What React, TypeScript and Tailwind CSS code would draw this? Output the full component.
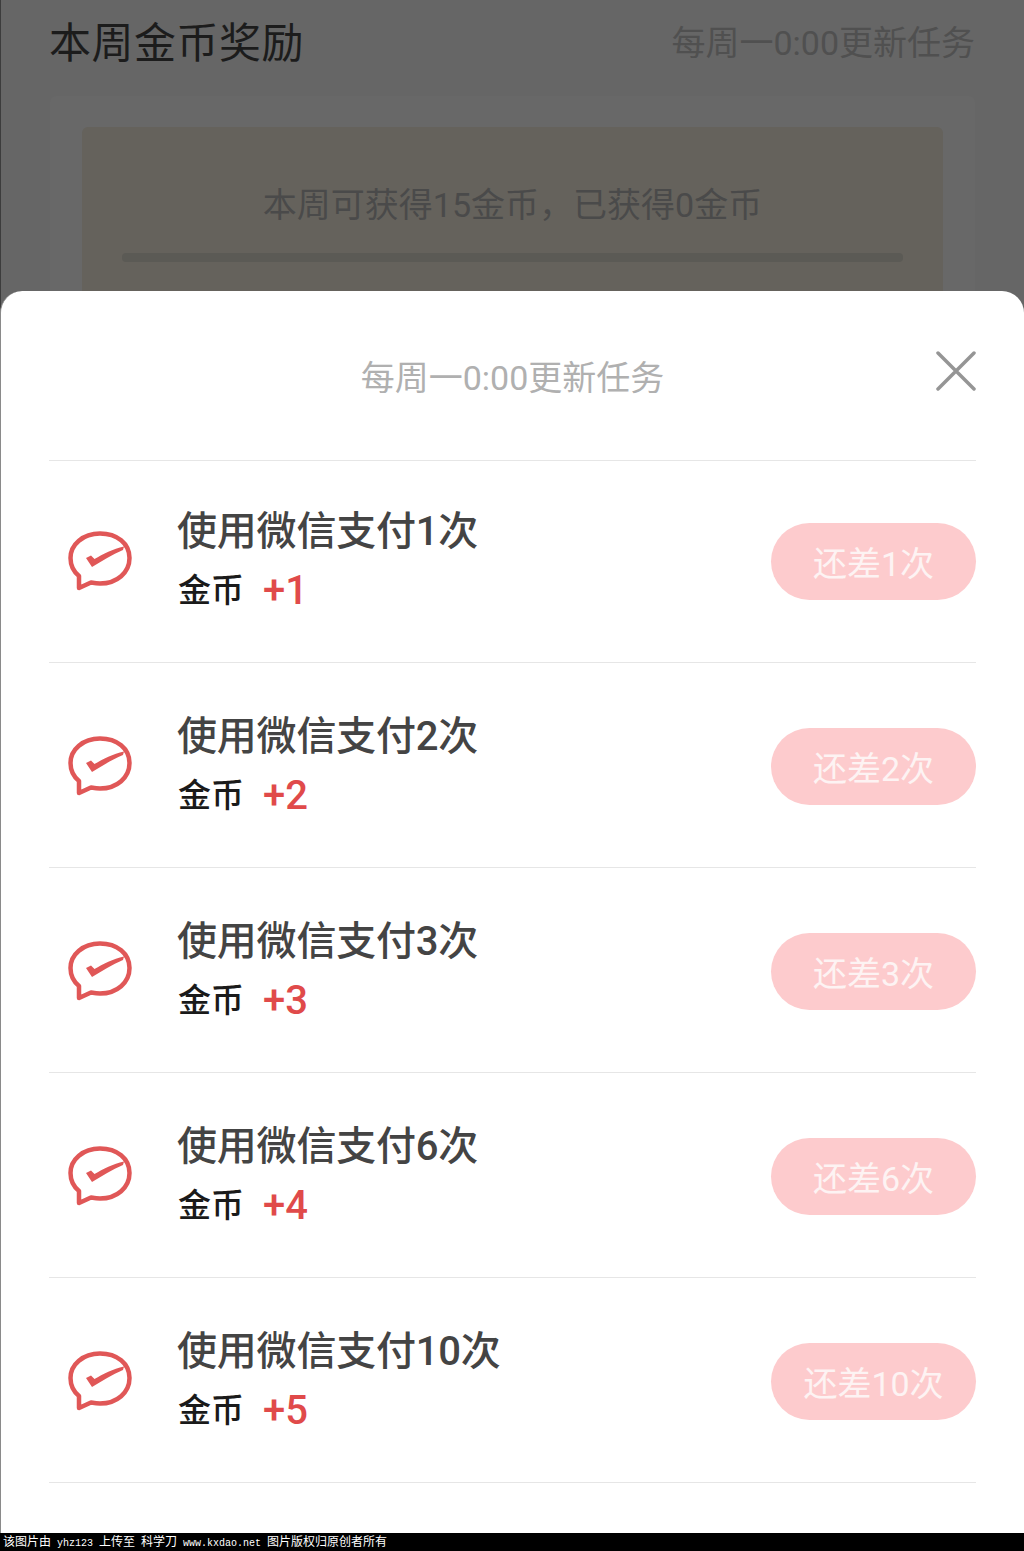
const font = "font-['Roboto','Noto_Sans_CJK_SC',sans-serif]";

const tasks = [
  { title: "使用微信支付1次", coin: "+1", left: "还差1次", first: true },
  { title: "使用微信支付2次", coin: "+2", left: "还差2次" },
  { title: "使用微信支付3次", coin: "+3", left: "还差3次" },
  { title: "使用微信支付6次", coin: "+4", left: "还差6次" },
  { title: "使用微信支付10次", coin: "+5", left: "还差10次" },
];

function WechatPayIcon() {
  return (
    <svg width="66" height="62" viewBox="0 0 66 62" fill="none" className="shrink-0">
      <path
        d="M32 2.5C15 2.5 2.5 13.5 2.500 27c0 7 3 13.500 8.500 18v12l12-5.500c3 .5 6 1 9 1 17 0 29.500-11 29.500-25.500S49 2.500 32 2.500Z"
        stroke="#e05757"
        strokeWidth="4.5"
        strokeLinejoin="round"
      />
      <path d="M18 27l5-2.500 3.500 3.500C35 23 45 18 56 15.500l-1 3.500C44 23.500 34 30 24 36Z" fill="#e05757" />
    </svg>
  );
}

function TaskRow({ title, coin, left, first }: { title: string; coin: string; left: string; first?: boolean }) {
  return (
    <div className={`flex items-center border-b border-[#e6e6e6] ${first ? "h-[202px]" : "h-[205px] pt-[3px]"}`}>
      <div className="flex w-[129px] shrink-0 pl-[19px] pt-[1px]">
        <WechatPayIcon />
      </div>
      <div className="flex-1 -ml-[1px]">
        <div className="text-[40px] font-medium leading-[48px] tracking-[-0.2px] text-[#444444]">{title}</div>
        <div className="ml-[1px] mt-[11px] flex items-center text-[33px] font-medium leading-[48px] text-[#1a1a1a]">
          金币
          <span className="ml-[19px] text-[40px] font-medium text-[#e04a4a]">{coin}</span>
        </div>
      </div>
      <div className="flex h-[77px] w-[205px] items-center justify-center rounded-full bg-[#fdcbcd] pt-[6px] text-[34px] text-[#fdf3f3]">
        {left}
      </div>
    </div>
  );
}

export default function App() {
  return (
    <div className={`relative h-[1551px] w-[1024px] overflow-hidden bg-[#666666] ${font}`}>
      <div className="h-[500px] border-l border-[#3c3c3c]">
        <div className="flex h-[96px] items-center justify-between pl-[48px] pr-[49px] pb-[10px]">
          <span className="text-[42px] tracking-[0.5px] text-[#1c1c1c]">本周金币奖励</span>
          <span className="text-[34px] text-[#505050]">每周一0:00更新任务</span>
        </div>
        <div className="mx-[49px] h-[400px] rounded-md bg-[#686868] px-[32px] pt-[31px]">
          <div className="h-[300px] rounded-md bg-[#65625c] px-[40px] pt-[53px] text-center">
            <div className="text-[34px] leading-[50px] text-[#4a4a4a]">本周可获得15金币，已获得0金币</div>
            <div className="mt-[23px] h-[9px] rounded-sm bg-[#5b5a55]" />
          </div>
        </div>
      </div>

      <div className="absolute inset-x-0 top-[291px] bottom-[18px] rounded-t-[22px] border-l border-[#8a8a8a] bg-white pl-[48px] pr-[48px]">
        <div className="relative flex h-[170px] items-center justify-center border-b border-[#e6e6e6] pt-[6px]">
          <span className="text-[34px] text-[#b0b0b0]">每周一0:00更新任务</span>
          <svg width="40" height="40" viewBox="0 0 40 40" className="absolute right-0 top-[60px]">
            <path d="M2 2l36 36M38 2L2 38" stroke="#959595" strokeWidth="3.5" strokeLinecap="round" />
          </svg>
        </div>
        {tasks.map((t) => (
          <TaskRow key={t.title} {...t} />
        ))}
      </div>

      <div className="absolute inset-x-0 bottom-0 h-[18px] whitespace-pre bg-black pl-[3px] font-['Liberation_Mono',monospace] text-[10px] leading-[18px] text-white">
        <span className={`text-[12px] ${font}`}>该图片由</span> yhz123 <span className={`text-[12px] ${font}`}>上传至</span>{" "}
        <span className={`text-[12px] ${font}`}>科学刀</span> www.kxdao.net{" "}
        <span className={`text-[12px] ${font}`}>图片版权归原创者所有</span>
      </div>
    </div>
  );
}
